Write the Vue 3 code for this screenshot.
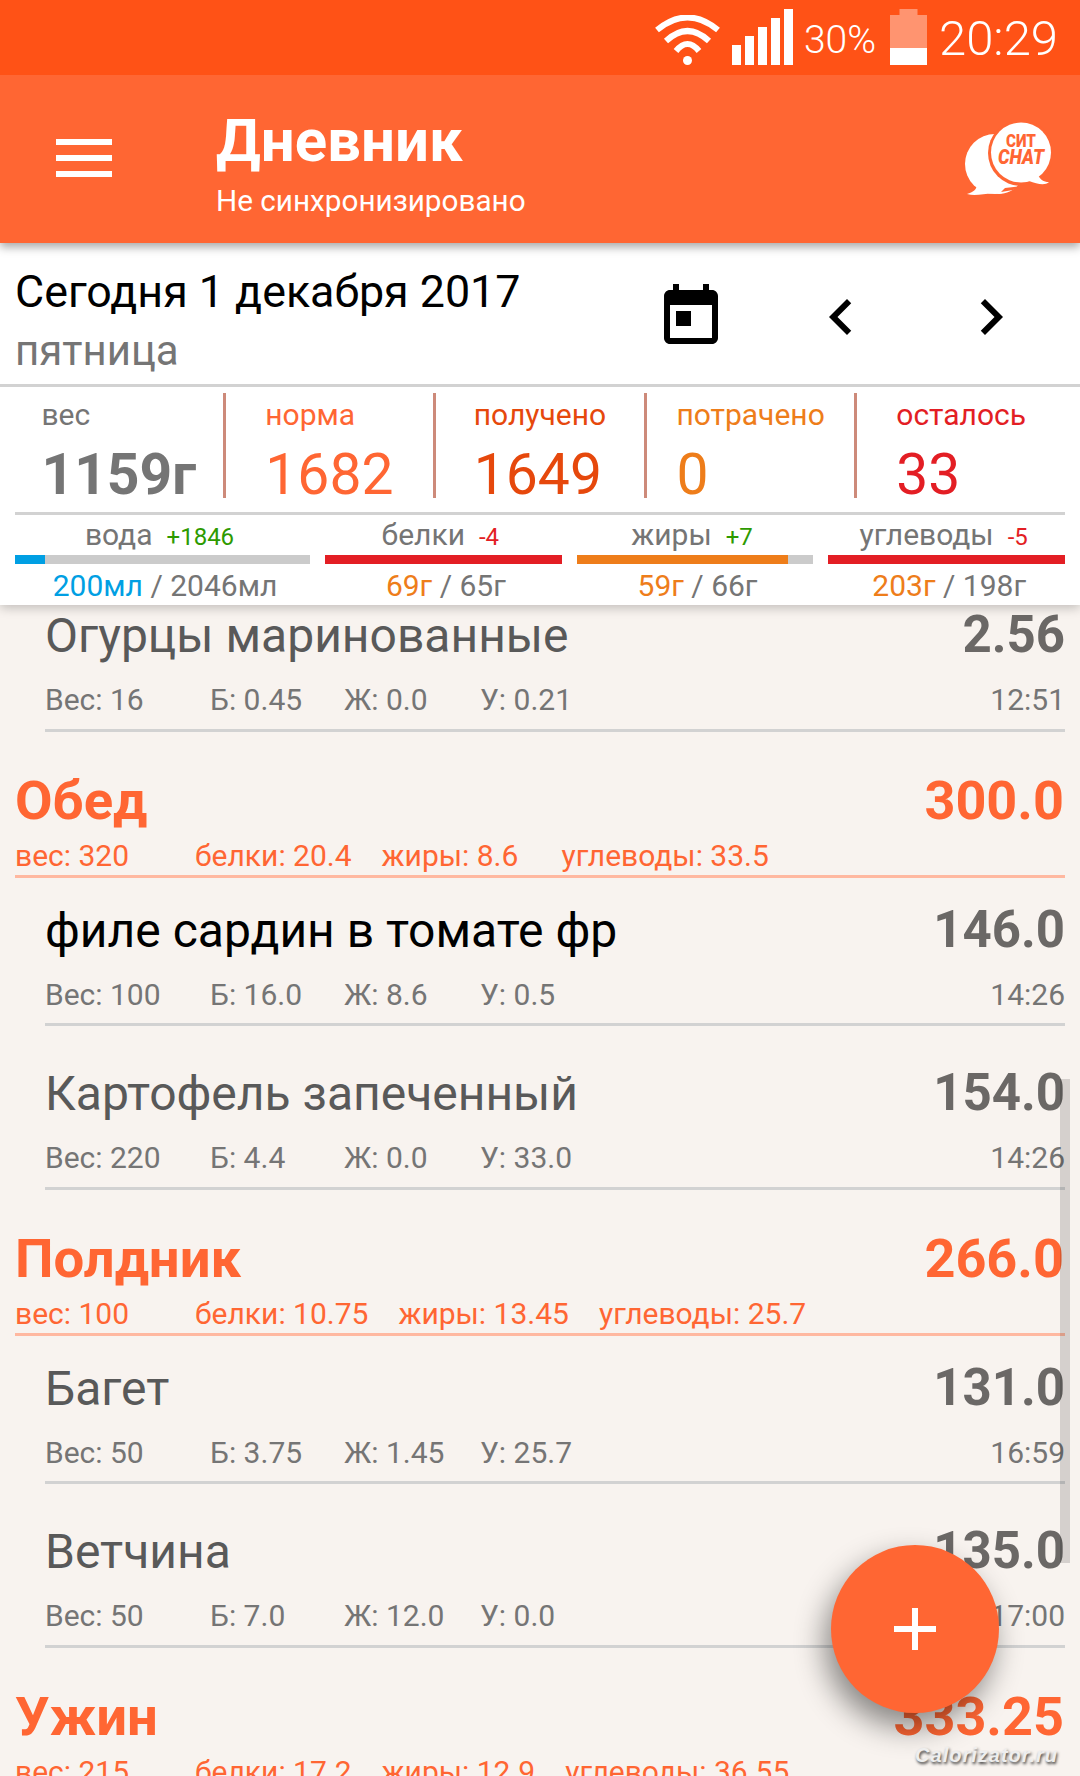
<template>
  <div class="page">
    <header class="topBar">
      <div class="statusBar">
        <svg class="wifi" width="66" height="50" viewBox="0 0 66 50">
          <path d="M2 15Q32.5 -10 63 15M11 26Q32.5 6 54 26M21 36Q32.5 22 44 36" fill="none" stroke="#fff" stroke-width="6" />
          <circle cx="32.5" cy="45.5" r="4.5" fill="#fff" />
        </svg>
        <div class="signal">
          <span v-for="h in [20, 29, 38, 47, 56]" :key="h" :style="{ height: h + 'px' }"></span>
        </div>
        <span class="percent">30%</span>
        <svg class="battery" width="37" height="56" viewBox="0 0 37 56">
          <path d="M9.5 0h18v6h9.5v50H0V6h9.5z" fill="#ff9470" />
          <rect y="39" width="37" height="17" fill="#fff" />
        </svg>
        <span class="clock">20:29</span>
      </div>
      <div class="appBar">
        <div class="burger"><span></span><span></span><span></span></div>
        <div class="titles">
          <div class="title">Дневник</div>
          <div class="subtitle">Не синхронизировано</div>
        </div>
        <svg class="chat" width="87" height="74" viewBox="0 0 87 74">
          <circle cx="30" cy="42" r="30" fill="#fff" />
          <path d="M12 62C12 68 8 70 2 72C12 75 22 70 34 72C42 72 50 68 54 62z" fill="#fff" />
          <circle cx="56" cy="31" r="33" fill="#ff6633" />
          <path d="M40 66l-4 4 12-2 8-4z" fill="#ff6633" />
          <circle cx="56" cy="30.500" r="30" fill="#fff" />
          <path d="M72 52C76 58 78 60 84 60C80 64 72 62 64 59C56 60 50 60 46 58z" fill="#fff" />
          <text x="41" y="25" class="chatTop" textLength="30" lengthAdjust="spacingAndGlyphs">СИТ</text>
          <text x="33" y="42" class="chatBottom" textLength="46" lengthAdjust="spacingAndGlyphs">CHAT</text>
        </svg>
      </div>
    </header>

    <section class="panel">
      <div class="dateRow">
        <div class="dateText">
          <div class="today">Сегодня 1 декабря 2017</div>
          <div class="weekday">пятница</div>
        </div>
        <svg class="navIcon" width="72" height="72" viewBox="0 0 24 24">
          <path d="M19 3h-1V1h-2v2H8V1H6v2H5c-1.11 0-1.99.9-1.99 2L3 19c0 1.1.89 2 2 2h14c1.1 0 2-.9 2-2V5c0-1.1-.9-2-2-2zm0 16H5V8h14v11zM7 10h5v5H7z" />
        </svg>
        <svg class="navIcon" width="72" height="72" viewBox="0 0 24 24">
          <path d="M15.41 7.41L14 6l-6 6 6 6 1.41-1.41L10.83 12z" />
        </svg>
        <svg class="navIcon" width="72" height="72" viewBox="0 0 24 24">
          <path d="M10 6L8.59 7.41 13.17 12l-4.58 4.59L10 18l6-6z" />
        </svg>
      </div>

      <div class="stats">
        <div v-for="s in stats" :key="s.label" class="statCell">
          <div class="statInner" :class="s.cls">
            <div class="statLabel">{{ s.label }}</div>
            <div class="statValue">{{ s.value }}</div>
          </div>
        </div>
      </div>

      <div class="macros">
        <div v-for="m in macros" :key="m.label" class="macro" :class="m.cls">
          <div class="macroHead">
            <span class="macroLabel">{{ m.label }}</span>
            <span class="macroDelta" :class="m.delta[0] === '+' ? 'plus' : 'minus'">{{ m.delta }}</span>
          </div>
          <div class="bar"><div class="barFill" :style="{ width: m.fill + '%', background: m.color }"></div></div>
          <div class="macroValue"><span :style="{ color: m.valueColor }">{{ m.got }}</span> / {{ m.goal }}</div>
        </div>
      </div>
    </section>

    <main class="list">
      <div class="scrollContent">
        <template v-for="(block, i) in blocks" :key="i">
          <div v-if="block.type === 'meal'" class="meal">
            <div class="mealHead">
              <span class="mealName">{{ block.name }}</span>
              <span class="mealCal">{{ block.cal }}</span>
            </div>
            <div class="mealSub">
              <span class="subWeight">вес: {{ block.w }}</span>
              <span class="subProt">белки: {{ block.p }}</span>
              <span class="subFat">жиры: {{ block.f }}</span>
              <span>углеводы: {{ block.c }}</span>
            </div>
          </div>
          <div
            v-else
            class="food"
            :class="{
              notFirst: blocks[i - 1] && blocks[i - 1].type === 'food',
              afterMeal: blocks[i - 1] && blocks[i - 1].type === 'meal',
            }"
          >
            <div class="foodHead">
              <span class="foodName" :class="{ dark: block.dark }">{{ block.name }}</span>
              <span class="foodCal">{{ block.cal }}</span>
            </div>
            <div class="foodMeta">
              <span class="metaW">Вес: {{ block.w }}</span>
              <span class="metaP">Б: {{ block.p }}</span>
              <span class="metaF">Ж: {{ block.f }}</span>
              <span class="metaC">У: {{ block.c }}</span>
              <span class="metaTime">{{ block.time }}</span>
            </div>
          </div>
        </template>
      </div>
      <div class="scrollThumb"></div>
      <button class="fab"><span class="plusH"></span><span class="plusV"></span></button>
      <div class="watermark">Calorizator.ru</div>
    </main>
  </div>
</template>

<script setup>
const stats = [
  { label: "вес", value: "1159г", cls: "grey" },
  { label: "норма", value: "1682", cls: "orange" },
  { label: "получено", value: "1649", cls: "deep" },
  { label: "потрачено", value: "0", cls: "amber" },
  { label: "осталось", value: "33", cls: "red" },
];

const macros = [
  { label: "вода", delta: "+1846", fill: 10, color: "#009fe3", got: "200мл", goal: "2046мл", valueColor: "#009fe3", cls: "water" },
  { label: "белки", delta: "-4", fill: 100, color: "#e31e24", got: "69г", goal: "65г", valueColor: "#ee7d1a" },
  { label: "жиры", delta: "+7", fill: 89.500, color: "#ee7d1a", got: "59г", goal: "66г", valueColor: "#ee7d1a" },
  { label: "углеводы", delta: "-5", fill: 100, color: "#e31e24", got: "203г", goal: "198г", valueColor: "#ee7d1a" },
];

const blocks = [
  { type: "food", name: "Огурцы маринованные", cal: "2.56", w: "16", p: "0.45", f: "0.0", c: "0.21", time: "12:51" },
  { type: "meal", name: "Обед", cal: "300.0", w: "320", p: "20.4", f: "8.6", c: "33.5" },
  { type: "food", name: "филе сардин в томате фр", cal: "146.0", w: "100", p: "16.0", f: "8.6", c: "0.5", time: "14:26", dark: true },
  { type: "food", name: "Картофель запеченный", cal: "154.0", w: "220", p: "4.4", f: "0.0", c: "33.0", time: "14:26" },
  { type: "meal", name: "Полдник", cal: "266.0", w: "100", p: "10.75", f: "13.45", c: "25.7" },
  { type: "food", name: "Багет", cal: "131.0", w: "50", p: "3.75", f: "1.45", c: "25.7", time: "16:59" },
  { type: "food", name: "Ветчина", cal: "135.0", w: "50", p: "7.0", f: "12.0", c: "0.0", time: "17:00" },
  { type: "meal", name: "Ужин", cal: "333.25", w: "215", p: "17.2", f: "12.9", c: "36.55" },
];
</script>

<style>
html,
body {
  margin: 0;
  height: 1776px;
  overflow: hidden;
}
</style>

<style scoped>
* {
  box-sizing: border-box;
}

.page {
  display: flex;
  flex-direction: column;
  width: 1080px;
  height: 1776px;
  overflow: hidden;
  background: #f8f3ef;
  font-family: Roboto, "Noto Sans", sans-serif;
}

.topBar {
  position: relative;
  z-index: 3;
  box-shadow: 0 4px 9px rgba(0, 0, 0, 0.35);
}

.statusBar {
  display: flex;
  align-items: flex-start;
  height: 75px;
  padding: 9px 22px 0 0;
  justify-content: flex-end;
  background: #ff5216;
  color: #fff;
}

.wifi {
  margin-top: 6px;
  margin-right: 11px;
}

.signal {
  display: flex;
  align-items: flex-end;
  gap: 4px;
  height: 56px;
  margin-right: 11px;
}

.signal span {
  width: 9px;
  background: #fff;
}

.percent {
  margin-right: 14px;
  margin-top: 9px;
  font-size: 39px;
  line-height: 44px;
  font-weight: 300;
}

.battery {
  margin-right: 12px;
}

.clock {
  margin-top: 3px;
  font-size: 49px;
  line-height: 54px;
  font-weight: 300;
}

.appBar {
  display: flex;
  align-items: center;
  height: 168px;
  padding: 0 28px 0 56px;
  background: #ff6633;
  color: #fff;
}

.burger {
  display: flex;
  flex-direction: column;
  gap: 10px;
  width: 56px;
  margin-right: 104px;
  margin-bottom: 2px;
}

.burger span {
  height: 6px;
  background: #fff;
}

.titles {
  flex: 1;
  padding-top: 7px;
}

.title {
  font-size: 60px;
  line-height: 70px;
  font-weight: 700;
}

.subtitle {
  font-size: 29.700px;
  line-height: 38px;
  margin-top: 6px;
}

.chatTop,
.chatBottom {
  fill: #ff6633;
  font-family: Roboto, sans-serif;
  font-weight: 900;
}

.chatTop {
  font-size: 19px;
}

.chatBottom {
  font-size: 21px;
  font-style: italic;
}

.panel {
  position: relative;
  z-index: 2;
  height: 362px;
  background: #fff;
  box-shadow: 0 3px 10px rgba(0, 0, 0, 0.22);
}

.dateRow {
  display: flex;
  align-items: center;
  height: 144px;
  padding-right: 53px;
  border-bottom: 3px solid #d2d2d2;
}

.dateText {
  flex: 1;
  align-self: flex-start;
  padding: 23px 0 0 15px;
}

.today {
  font-size: 44.800px;
  line-height: 52px;
  color: #000;
}

.weekday {
  margin-top: 9px;
  font-size: 42px;
  line-height: 48px;
  color: #757575;
}

.navIcon {
  margin-left: 78px;
  margin-top: 6px;
}

.stats {
  display: flex;
  height: 128px;
  margin: 0 15px;
  padding-top: 6px;
  border-bottom: 3px solid #d2d2d2;
  align-items: flex-start;
}

.statCell {
  flex: 1;
  display: flex;
  justify-content: center;
  height: 105px;
  border-right: 3px solid #cd8a7a;
}

.statCell:last-child {
  border-right: none;
}

.statInner {
  display: flex;
  flex-direction: column;
}

.statLabel {
  font-size: 30px;
  line-height: 36px;
  margin-top: 4px;
}

.statValue {
  font-size: 57px;
  line-height: 64px;
  margin-top: 10px;
}

.grey {
  color: #757575;
}

.grey .statValue {
  font-weight: 700;
}

.orange {
  color: #ff6633;
}

.deep {
  color: #e6480c;
}

.amber {
  color: #ee7d1a;
}

.red {
  color: #e31e24;
}

.macros {
  display: flex;
  gap: 15px;
  padding: 0 15px;
}

.macro {
  flex: 1;
  min-width: 0;
}

.macro.water {
  flex: none;
  width: 295px;
}

.macroHead {
  display: flex;
  justify-content: center;
  align-items: baseline;
  gap: 14px;
  height: 39px;
  line-height: 38px;
  margin-top: 1px;
  padding-right: 6px;
  color: #757575;
}

.macroLabel {
  font-size: 30px;
}

.macroDelta {
  font-size: 24px;
}

.plus {
  color: #2d9a00;
}

.minus {
  color: #e31e24;
}

.bar {
  height: 9px;
  background: #cbcbcb;
}

.barFill {
  height: 100%;
}

.macroValue {
  margin-top: 4px;
  padding-left: 5px;
  text-align: center;
  font-size: 30px;
  line-height: 36px;
  color: #757575;
}

.list {
  position: relative;
  flex: 1;
  overflow: hidden;
}

.scrollContent {
  margin-top: -21px;
}

.meal {
  height: 146px;
  margin: 0 15px;
  padding-top: 36px;
  border-bottom: 3px solid #ffb8a0;
  color: #ff6633;
}

.mealHead {
  display: flex;
  justify-content: space-between;
  align-items: baseline;
  height: 64px;
  padding-right: 1px;
  line-height: 64px;
  font-size: 54px;
  font-weight: 700;
}

.mealName {
  font-size: 54.500px;
}

.mealSub {
  display: flex;
  margin-top: 5px;
  font-size: 30px;
  line-height: 38px;
}

.subWeight {
  width: 180px;
}

.subProt {
  padding-right: 30px;
}

.subFat {
  min-width: 180px;
  padding-right: 30px;
}

.food {
  height: 148px;
  margin: 0 15px 0 45px;
  padding-top: 23px;
  border-bottom: 3px solid #d2d2d2;
}

.food.afterMeal {
  padding-top: 24px;
}

.food.notFirst {
  margin-top: 16px;
}

.foodHead {
  display: flex;
  justify-content: space-between;
  align-items: baseline;
  height: 56px;
  line-height: 56px;
}

.foodName {
  font-size: 48px;
  color: #595959;
}

.foodName.dark {
  color: #000;
}

.foodCal {
  font-size: 51px;
  font-weight: 700;
  color: #6b6866;
}

.foodMeta {
  display: flex;
  margin-top: 19px;
  font-size: 30px;
  line-height: 36px;
  color: #757575;
}

.metaW {
  width: 165px;
}

.metaP {
  width: 134px;
}

.metaF {
  width: 136px;
}

.metaTime {
  margin-left: auto;
}

.scrollThumb {
  position: absolute;
  top: 474px;
  right: 10px;
  width: 10px;
  height: 484px;
  background: rgba(0, 0, 0, 0.14);
}

.fab {
  position: absolute;
  left: 831px;
  top: 940px;
  width: 168px;
  height: 168px;
  padding: 0;
  border: none;
  border-radius: 50%;
  background: #ff6633;
  box-shadow: -6px 14px 30px rgba(0, 0, 0, 0.45);
}

.plusH,
.plusV {
  position: absolute;
  background: #fff;
}

.plusH {
  left: 63px;
  top: 81px;
  width: 42px;
  height: 6px;
}

.plusV {
  left: 81px;
  top: 63px;
  width: 6px;
  height: 42px;
}

.watermark {
  position: absolute;
  right: 22px;
  top: 1138px;
  font-family: "Liberation Sans", sans-serif;
  font-size: 20px;
  line-height: 24px;
  font-weight: 700;
  font-style: italic;
  letter-spacing: 1px;
  color: #eeeeee;
  text-shadow: 1px 2px 3px rgba(0, 0, 0, 0.75);
}
</style>
